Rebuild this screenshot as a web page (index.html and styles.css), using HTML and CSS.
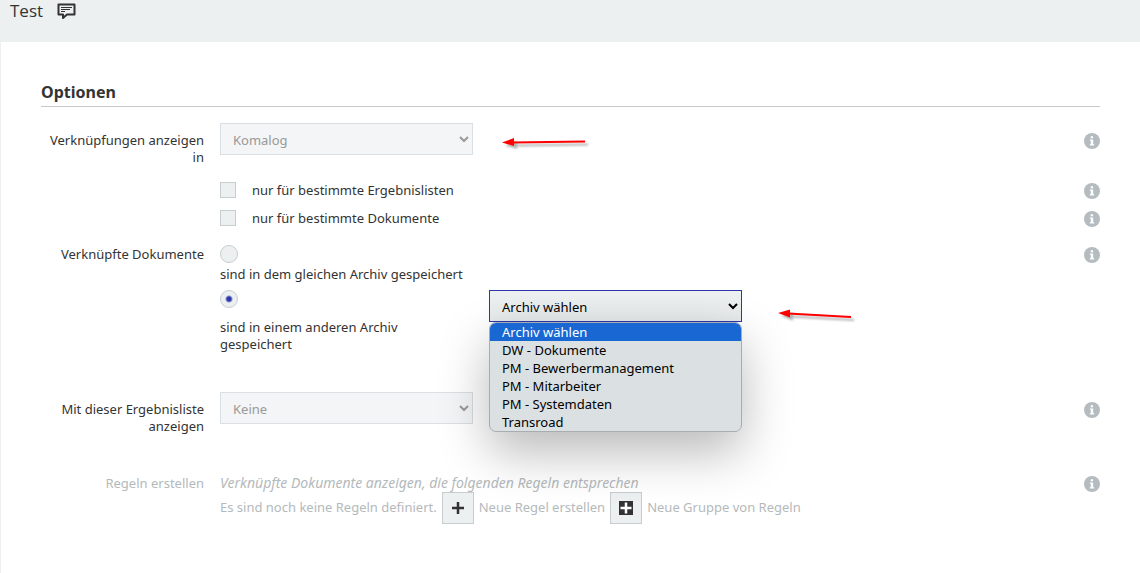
FILE: index.html
```html
<!DOCTYPE html>
<html lang="de">
<head>
    <meta charset="UTF-8">
    <title>Test</title>
    <link rel="stylesheet" href="styles.css">
</head>
<body>

<svg class="sprite" aria-hidden="true">
    <symbol id="info" viewBox="0 0 16 16">
        <circle cx="8" cy="8" r="8" fill="#b4bcc0"/>
        <path fill="#fff" d="M6.7 3.3h2.4v2H6.7zM5.9 6.4h3.3v4.9h1v1.3H5.8v-1.3h1V7.7h-.9z"/>
    </symbol>
</svg>

<header class="topbar">
    <h1>Test</h1>
    <button class="comment" aria-label="Kommentar">
        <svg width="19" height="17" viewBox="0 0 19 17" fill="none" stroke="#333">
            <path stroke-width="2" stroke-linejoin="round" d="M1.500 1.500h16v10h-7.500L6 15v-3.500H1.500z"/>
            <path stroke-width="1" d="M4 4.500h11M4 6.500h9M4 8.500h4"/>
        </svg>
    </button>
</header>

<main class="panel">
    <h2>Optionen</h2>
    <form class="options">
        <div class="row">
            <label class="name" for="target">Verknüpfungen anzeigen in</label>
            <div class="field">
                <select id="target" disabled>
                    <option>Komalog</option>
                </select>
                <svg class="arrow arrow-top" width="90" height="16" viewBox="0 0 90 16">
                    <path stroke="#f00" stroke-width="2" d="M10 8.500 83 7.500"/>
                    <path fill="#f00" d="M0 8.500 12 4v8z"/>
                </svg>
            </div>
            <button type="button" class="info" aria-label="Info"><svg><use href="#info"/></svg></button>
        </div>
        <div class="row check-row">
            <div class="field check">
                <input type="checkbox" id="lists">
                <label for="lists">nur für bestimmte Ergebnislisten</label>
            </div>
            <button type="button" class="info" aria-label="Info"><svg><use href="#info"/></svg></button>
        </div>
        <div class="row check-row">
            <div class="field check">
                <input type="checkbox" id="docs">
                <label for="docs">nur für bestimmte Dokumente</label>
            </div>
            <button type="button" class="info" aria-label="Info"><svg><use href="#info"/></svg></button>
        </div>
        <div class="row archive-row">
            <span class="name">Verknüpfte Dokumente</span>
            <div class="field">
                <div class="choice">
                    <input type="radio" name="archive" id="same">
                    <label for="same">sind in dem gleichen Archiv gespeichert</label>
                </div>
                <div class="other">
                    <div class="choice">
                        <input type="radio" name="archive" id="other" checked>
                        <label for="other">sind in einem anderen Archiv gespeichert</label>
                    </div>
                    <div class="dropdown">
                        <select class="open" aria-label="Archiv">
                            <option>Archiv wählen</option>
                        </select>
                        <ul class="menu" role="listbox">
                            <li class="active" role="option">Archiv wählen</li>
                            <li role="option">DW - Dokumente</li>
                            <li role="option">PM - Bewerbermanagement</li>
                            <li role="option">PM - Mitarbeiter</li>
                            <li role="option">PM - Systemdaten</li>
                            <li role="option">Transroad</li>
                        </ul>
                        <svg class="arrow arrow-menu" width="80" height="16" viewBox="0 0 80 16">
                            <path stroke="#f00" stroke-width="2" d="M10 4.500 73 8"/>
                            <path fill="#f00" d="M0 4 12 0.500v8z"/>
                        </svg>
                    </div>
                </div>
            </div>
            <button type="button" class="info" aria-label="Info"><svg><use href="#info"/></svg></button>
        </div>
        <div class="row result-row">
            <label class="name" for="result">Mit dieser Ergebnisliste anzeigen</label>
            <div class="field">
                <select id="result" disabled>
                    <option>Keine</option>
                </select>
            </div>
            <button type="button" class="info" aria-label="Info"><svg><use href="#info"/></svg></button>
        </div>
        <div class="row rules-row">
            <span class="name">Regeln erstellen</span>
            <div class="field">
                <em>Verknüpfte Dokumente anzeigen, die folgenden Regeln entsprechen</em>
                <div class="rules">
                    <span>Es sind noch keine Regeln definiert.</span>
                    <button type="button" id="add-rule" class="add">
                        <svg width="14" height="14" viewBox="0 0 14 14"><path stroke="#333" stroke-width="2.500" d="M7 1v12M1 7h12"/></svg>
                    </button>
                    <label for="add-rule">Neue Regel erstellen</label>
                    <button type="button" id="add-group" class="add">
                        <svg width="14" height="14" viewBox="0 0 14 14"><path fill="#333" d="M0 0h14v14H0z"/><path stroke="#fff" stroke-width="2.500" d="M7 1.500v11M1.500 7h11"/></svg>
                    </button>
                    <label for="add-group">Neue Gruppe von Regeln</label>
                </div>
            </div>
            <button type="button" class="info" aria-label="Info"><svg><use href="#info"/></svg></button>
        </div>
    </form>
</main>

</body>
</html>
```
FILE: styles.css
```css
* {
    box-sizing: border-box;
}

body {
    margin: 0;
    background-color: #fff;
    color: #333;
    font-family: "Noto Sans", sans-serif;
    font-size: 13px;
    line-height: 17px;
}

.sprite {
    position: absolute;
    width: 0;
    height: 0;
}

button {
    padding: 0;
    border: 0;
    background: none;
    cursor: pointer;
}

svg {
    display: block;
}

.topbar {
    display: flex;
    gap: 14px;
    height: 42px;
    padding-left: 10px;
    background-color: #ecf0f1;
}

.topbar h1 {
    margin: 0;
    font-family: "Open Sans", sans-serif;
    font-size: 17px;
    font-weight: 400;
    line-height: 22px;
}

.comment {
    height: 22px;
}

.panel {
    min-height: calc(100vh - 42px);
    padding: 40px 40px 32px;
    border-left: 1px solid #ecf0f1;
}

h2 {
    margin: 0 0 16px;
    border-bottom: 1px solid #c8c8c8;
    font-size: 16px;
    font-weight: 700;
    line-height: 20px;
    padding-bottom: 4px;
}

.row {
    display: grid;
    grid-template-columns: 163px 1fr 16px;
    column-gap: 16px;
    min-height: 53px;
}

.name {
    padding-top: 9px;
    text-align: right;
}

.field {
    position: relative;
    grid-column: 2;
}

.info {
    grid-column: 3;
    width: 16px;
    height: 16px;
    margin-top: 10px;
}

.info svg {
    width: 16px;
    height: 16px;
}

select {
    display: block;
    width: 253px;
    height: 32px;
    padding: 1px 8px 0;
    border: 1px solid #c8cdd0;
    border-radius: 0;
    background-color: #ecf0f1;
    color: #000;
    font: inherit;
}

select:disabled {
    opacity: 1;
    border-color: #d9dfe2;
    background-color: #f3f5f6;
    color: #999;
}

select.open {
    border-color: #2c37ab;
    background-image: linear-gradient(#eef1f2, #e6eaeb);
}

.check-row {
    min-height: 28px;
}

.check-row .info {
    margin-top: 7px;
}

.check {
    display: flex;
    align-items: center;
    gap: 16px;
}

input {
    flex: none;
    appearance: none;
    display: block;
    margin: 0;
    border: 1px solid #c8cdd0;
    background-color: #ecf0f1;
}

input[type=checkbox] {
    width: 16px;
    height: 16px;
}

input[type=radio] {
    width: 18px;
    height: 18px;
    margin-bottom: 3px;
    border-radius: 50%;
}

input[type=radio]:checked {
    margin-bottom: 11px;
    background-image: radial-gradient(circle, #2c37ab 2px, transparent 4px);
}

.archive-row {
    padding-top: 5px;
}

.archive-row > .field {
    padding-top: 8px;
}

.choice label {
    display: block;
}

.other {
    display: grid;
    grid-template-columns: 253px 253px;
    column-gap: 16px;
    padding-top: 7px;
}

.other .choice {
    padding-right: 16px;
}

.dropdown {
    position: relative;
}

.menu {
    position: absolute;
    z-index: 1;
    top: 32px;
    left: 0;
    width: 100%;
    margin: 0;
    padding: 0;
    overflow: hidden;
    border: 1px solid #a9adaf;
    border-radius: 7px;
    background-color: #dbe0e2;
    box-shadow: 0 20px 50px rgba(0, 0, 0, .28);
    color: #000;
    line-height: 18px;
    list-style: none;
}

.menu li {
    padding: 0 12px;
}

.menu .active {
    background-color: #1967d2;
    color: #fff;
}

.arrow {
    position: absolute;
    overflow: visible;
    filter: drop-shadow(3px 3px 1px rgba(0, 0, 0, .3));
}

.arrow-top {
    top: 11px;
    left: 282px;
}

.arrow-menu {
    top: 19px;
    left: 289px;
}

.result-row {
    margin-top: 39px;
}

.rules-row {
    margin-top: 21px;
    color: #b4b9bb;
}

.rules-row .field {
    padding-top: 8px;
}

.rules-row em {
    font-size: 14px;
}

.rules {
    display: flex;
    gap: 5px;
    line-height: 30px;
}

.add {
    display: grid;
    place-items: center;
    width: 32px;
    height: 32px;
    border: 1px solid #c8cdd0;
    background-color: #ecf0f1;
}
```
